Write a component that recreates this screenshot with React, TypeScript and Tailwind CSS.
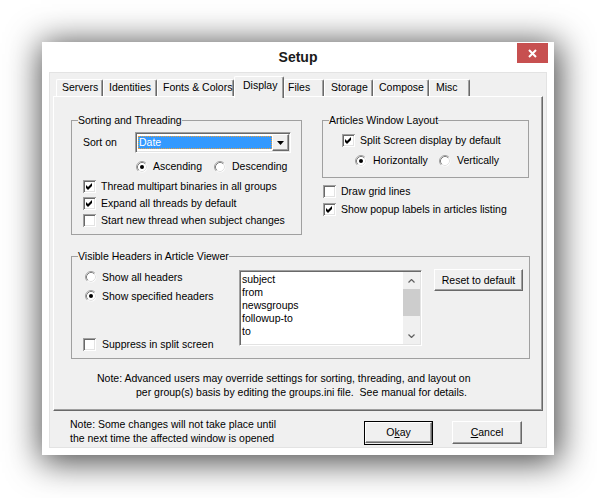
import React from "react";

const raised =
  "border border-t-white border-l-white border-r-[#696969] border-b-[#696969] bg-[#f0f0f0] shadow-[inset_-1px_-1px_0_#a0a0a0]";
const sunken =
  "border border-t-[#a0a0a0] border-l-[#a0a0a0] border-r-white border-b-white shadow-[inset_1px_1px_0_#696969,inset_-1px_-1px_0_#e3e3e3]";

function Check({ on }: { on?: boolean }) {
  return (
    <svg width="13" height="13" viewBox="0 0 13 13" className="shrink-0">
      <g shapeRendering="crispEdges">
        <rect width="13" height="13" fill="#fff" />
        <path d="M0 0h13v1H1v12H0z" fill="#a0a0a0" />
        <path d="M1 1h11v1H2v10H1z" fill="#696969" />
        <path d="M12 1h1v12H1v-1h11z" fill="#fff" />
        <path d="M11 2h1v10H2v-1h9z" fill="#e3e3e3" />
      </g>
      {on && <path d="M3 5l2 2 4-4v3l-4 4-2-2z" fill="#000" />}
    </svg>
  );
}

function Radio({ on }: { on?: boolean }) {
  return (
    <svg width="12" height="12" viewBox="0 0 12 12" className="shrink-0">
      <circle cx="6" cy="6" r="5.5" fill="#fff" />
      <path d="M9.89 2.11A5.5 5.5 0 0 0 2.11 9.89" fill="none" stroke="#a0a0a0" />
      <path d="M9.18 2.82A4.5 4.5 0 0 0 2.82 9.18" fill="none" stroke="#808080" />
      <path d="M2.82 9.18A4.5 4.5 0 0 0 9.18 2.82" fill="none" stroke="#e3e3e3" />
      {on && <circle cx="6" cy="6" r="2" fill="#000" />}
    </svg>
  );
}

function Combo() {
  return (
    <div className={`${sunken} box-border flex h-[21px] w-[156px] bg-white p-[1px]`}>
      <div className="my-[2px] ml-[1px] flex flex-1 items-center border border-dotted border-[#e8a040] bg-[#3399ff] text-white">
        Date
      </div>
      <div className={`${raised} box-border flex w-[17px] items-center justify-center`}>
        <svg width="7" height="4" viewBox="0 0 7 4">
          <path d="M0 0h7L3.5 4z" fill="#000" />
        </svg>
      </div>
    </div>
  );
}

function Chevron({ down }: { down?: boolean }) {
  return (
    <div className="flex h-[17px] w-[17px] items-center justify-center">
      <svg width="7" height="4" viewBox="0 0 7 4">
        <path d={down ? "M0.5 0.5l3 3 3-3" : "M0.5 3.5l3-3 3 3"} fill="none" stroke="#606060" strokeWidth="1.2" />
      </svg>
    </div>
  );
}

const tabs = [
  { label: "Servers", cls: "w-[47px] pl-[5px]" },
  { label: "Identities", cls: "w-[54px] pl-[5px]" },
  { label: "Fonts & Colors", cls: "w-[77px] pl-[5px]" },
  { label: "Display", cls: "w-[50px] pl-[8px]", active: true },
  { label: "Files", cls: "w-[40px] pl-[3px]" },
  { label: "Storage", cls: "w-[49px] pl-[6px]" },
  { label: "Compose", cls: "w-[56px] pl-[5px]" },
  { label: "Misc", cls: "w-[41px] pl-[6px]" },
];

const headers = ["subject", "from", "newsgroups", "followup-to", "to"];

export default function App() {
  return (
    <div className="h-[498px] w-[597px] bg-white pl-[42px] pt-[42px] font-['Liberation_Sans',Arial,sans-serif] text-[10.5px] leading-[13px] text-black">
      <div className="flex h-[413px] w-[512px] flex-col bg-white shadow-[2px_4px_32px_3px_rgba(0,0,0,0.72)]">
        {/* Title bar */}
        <div className="flex h-[30px] shrink-0">
          <div className="w-[37px]" />
          <div className="flex flex-1 items-center justify-center text-[14px] font-bold text-[#1a1a1a]">
            Setup
          </div>
          <button className="mr-[6px] mt-[1px] flex h-[20px] w-[31px] items-center justify-center bg-[#c75050]">
            <svg width="9" height="9" viewBox="0 0 9 9">
              <path d="M1 1l7 7M8 1l-7 7" stroke="#fff" strokeWidth="2" />
            </svg>
          </button>
        </div>

        {/* Client area */}
        <div className="mx-[7px] flex flex-1 flex-col border border-[#e3e3e3] bg-[#f0f0f0] pl-[3px]">
          {/* Tabs */}
          <div className="flex h-[23px] items-end pl-[3px]">
            {tabs.map((t) =>
              t.active ? (
                <div
                  key={t.label}
                  className={`relative z-10 -mb-[2px] box-border h-[22px] rounded-t-[2px] border-l border-r border-t border-l-white border-r-[#696969] border-t-white bg-[#f0f0f0] pt-[2px] shadow-[inset_-1px_0_0_#a0a0a0] ${t.cls}`}
                >
                  {t.label}
                </div>
              ) : (
                <div
                  key={t.label}
                  className={`box-border h-[17px] rounded-t-[2px] border-l border-r border-t border-l-white border-r-[#696969] border-t-white pt-[1px] shadow-[inset_-1px_0_0_#a0a0a0] ${t.cls}`}
                >
                  {t.label}
                </div>
              )
            )}
          </div>

          {/* Tab panel */}
          <div className="box-border h-[315px] w-[490px] border border-b-[#696969] border-l-white border-r-[#696969] border-t-white pl-[17px] pt-[17px] shadow-[inset_-1px_-1px_0_#a0a0a0]">
            <div className="flex items-start gap-[20px]">
              {/* Sorting and Threading */}
              <fieldset className="box-border w-[231px] border border-[#a0a0a0] px-[6px] pb-[5px]">
                <legend>Sorting and Threading</legend>
                <div className="mt-[5px] flex h-[21px] items-center pl-[5px]">
                  <span className="w-[52px]">Sort on</span>
                  <Combo />
                </div>
                <div className="mt-[7px] flex h-[13px] items-center pl-[58px]">
                  <span className="flex w-[78px] items-center gap-[5px]">
                    <Radio on />
                    Ascending
                  </span>
                  <span className="flex items-center gap-[6px]">
                    <Radio />
                    Descending
                  </span>
                </div>
                <div className="mt-[5px] flex h-[17px] items-center gap-[5px] pl-[5px]">
                  <Check on />
                  Thread multipart binaries in all groups
                </div>
                <div className="flex h-[17px] items-center gap-[5px] pl-[5px]">
                  <Check on />
                  Expand all threads by default
                </div>
                <div className="flex h-[17px] items-center gap-[5px] pl-[5px]">
                  <Check />
                  Start new thread when subject changes
                </div>
              </fieldset>

              {/* Right column */}
              <div className="flex w-[207px] flex-col">
                <fieldset className="box-border border border-[#a0a0a0] px-[6px] pb-[9px]">
                  <legend>Articles Window Layout</legend>
                  <div className="mt-[6px] flex h-[15px] items-center gap-[5px] pl-[13px]">
                    <Check on />
                    Split Screen display by default
                  </div>
                  <div className="mt-[5px] flex h-[15px] items-center pl-[26px]">
                    <span className="flex w-[84px] items-center gap-[6px]">
                      <Radio on />
                      Horizontally
                    </span>
                    <span className="flex items-center gap-[6px]">
                      <Radio />
                      Vertically
                    </span>
                  </div>
                </fieldset>
                <div className="mt-[5px] flex h-[17px] items-center gap-[5px] pl-[1px]">
                  <Check />
                  Draw grid lines
                </div>
                <div className="mt-[1px] flex h-[17px] items-center gap-[5px] pl-[1px]">
                  <Check on />
                  Show popup labels in articles listing
                </div>
              </div>
            </div>

            {/* Visible headers */}
            <fieldset className="mt-[15px] box-border w-[458px] border border-[#a0a0a0] px-[6px] pb-[7px]">
              <legend>Visible Headers in Article Viewer</legend>
              <div className="flex items-start">
                <div className="flex w-[161px] flex-col">
                  <div className="mt-[7px] flex h-[14px] items-center gap-[5px] pl-[7px]">
                    <Radio />
                    Show all headers
                  </div>
                  <div className="mt-[5px] flex h-[14px] items-center gap-[5px] pl-[7px]">
                    <Radio on />
                    Show specified headers
                  </div>
                  <div className="mt-[34px] flex h-[14px] items-center gap-[6px] pl-[5px]">
                    <Check />
                    Suppress in split screen
                  </div>
                </div>
                <div className={`${sunken} mt-[7px] box-border flex h-[76px] w-[183px] bg-white p-[1px]`}>
                  <div className="flex-1 pl-[1px] pt-[1px]">
                    {headers.map((h) => (
                      <div key={h} className="h-[13px]">
                        {h}
                      </div>
                    ))}
                  </div>
                  <div className="flex w-[17px] flex-col bg-[#f0f0f0]">
                    <Chevron />
                    <div className="h-[27px] bg-[#cdcdcd]" />
                    <div className="flex-1" />
                    <Chevron down />
                  </div>
                </div>
                <button className={`${raised} ml-[12px] mt-[6px] box-border h-[22px] w-[89px]`}>
                  Reset to default
                </button>
              </div>
            </fieldset>

            {/* Note */}
            <div className="mt-[12px] leading-[14px]">
              <div className="pl-[26px]">
                Note: Advanced users may override settings for sorting, threading, and layout on
              </div>
              <div className="pl-[65px]">
                per group(s) basis by editing the groups.ini file.&nbsp; See manual for details.
              </div>
            </div>
          </div>

          {/* Bottom row */}
          <div className="flex">
            <div className="w-[311px] pl-[17px] pt-[6px] leading-[14px]">
              <div>Note: Some changes will not take place until</div>
              <div>the next time the affected window is opened</div>
            </div>
            <div className="mt-[10px] border border-black">
              <button className={`${raised} box-border h-[21px] w-[67px]`}>
                O<u>k</u>ay
              </button>
            </div>
            <button className={`${raised} ml-[19px] mt-[10px] box-border h-[23px] w-[70px]`}>
              <u>C</u>ancel
            </button>
          </div>
        </div>
        <div className="h-[7px] shrink-0" />
      </div>
    </div>
  );
}
